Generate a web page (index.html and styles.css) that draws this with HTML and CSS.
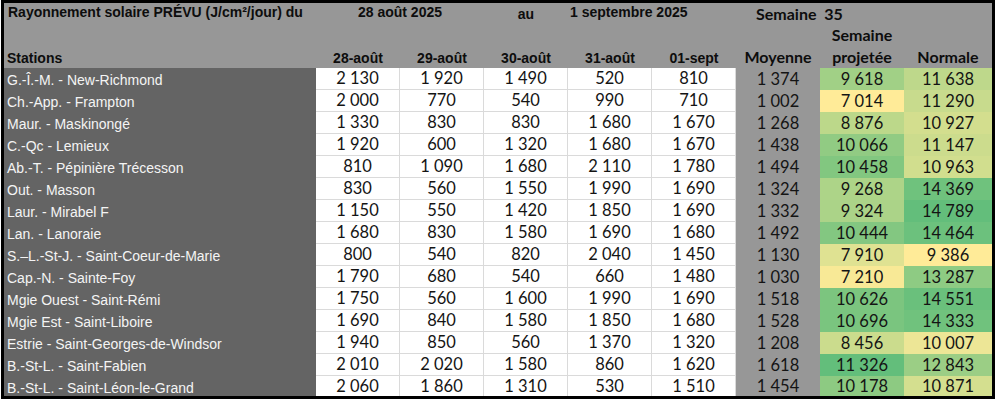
FILE: index.html
```html
<!DOCTYPE html>
<html lang="fr">
<head>
<meta charset="utf-8">
<title>Rayonnement solaire prévu</title>
<link rel="stylesheet" href="styles.css">
</head>
<body>
<div class="sheet">
  <div class="row head1">
    <div class="h title">Rayonnement solaire PRÉVU (J/cm²/jour) du</div>
    <div class="h from">28 août 2025</div>
    <div class="h au">au</div>
    <div class="h to">1 septembre 2025</div>
    <div class="h week">Semaine&nbsp; 35</div>
  </div>
  <div class="row head2">
    <div class="h blank"></div>
    <div class="h cal">Semaine</div>
    <div class="h"></div>
  </div>
  <div class="row head3">
    <div class="h stations">Stations</div>
    <div class="h date">28-août</div>
    <div class="h date">29-août</div>
    <div class="h date">30-août</div>
    <div class="h date">31-août</div>
    <div class="h date">01-sept</div>
    <div class="h cal3">Moyenne</div>
    <div class="h cal3">projetée</div>
    <div class="h cal3">Normale</div>
  </div>

  <div class="row"><div class="st">G.-Î.-M. - New-Richmond</div><div class="d">2&nbsp;130</div><div class="d">1&nbsp;920</div><div class="d">1&nbsp;490</div><div class="d">520</div><div class="d">810</div><div class="m">1&nbsp;374</div><div class="c" style="background:rgb(161,208,134)">9&nbsp;618</div><div class="c" style="background:rgb(190,216,139)">11&nbsp;638</div></div>
  <div class="row"><div class="st">Ch.-App. - Frampton</div><div class="d">2&nbsp;000</div><div class="d">770</div><div class="d">540</div><div class="d">990</div><div class="d">710</div><div class="m">1&nbsp;002</div><div class="c" style="background:rgb(255,235,152)">7&nbsp;014</div><div class="c" style="background:rgb(200,219,141)">11&nbsp;290</div></div>
  <div class="row"><div class="st">Maur. - Maskinongé</div><div class="d">1&nbsp;330</div><div class="d">830</div><div class="d">830</div><div class="d">1&nbsp;680</div><div class="d">1&nbsp;670</div><div class="m">1&nbsp;268</div><div class="c" style="background:rgb(188,216,138)">8&nbsp;876</div><div class="c" style="background:rgb(211,222,142)">10&nbsp;927</div></div>
  <div class="row"><div class="st">C.-Qc - Lemieux</div><div class="d">1&nbsp;920</div><div class="d">600</div><div class="d">1&nbsp;320</div><div class="d">1&nbsp;680</div><div class="d">1&nbsp;670</div><div class="m">1&nbsp;438</div><div class="c" style="background:rgb(145,203,131)">10&nbsp;066</div><div class="c" style="background:rgb(204,220,141)">11&nbsp;147</div></div>
  <div class="row"><div class="st">Ab.-T. - Pépinière Trécesson</div><div class="d">810</div><div class="d">1&nbsp;090</div><div class="d">1&nbsp;680</div><div class="d">2&nbsp;110</div><div class="d">1&nbsp;780</div><div class="m">1&nbsp;494</div><div class="c" style="background:rgb(130,199,128)">10&nbsp;458</div><div class="c" style="background:rgb(209,222,142)">10&nbsp;963</div></div>
  <div class="row"><div class="st">Out. - Masson</div><div class="d">830</div><div class="d">560</div><div class="d">1&nbsp;550</div><div class="d">1&nbsp;990</div><div class="d">1&nbsp;690</div><div class="m">1&nbsp;324</div><div class="c" style="background:rgb(173,212,136)">9&nbsp;268</div><div class="c" style="background:rgb(111,194,125)">14&nbsp;369</div></div>
  <div class="row"><div class="st">Laur. - Mirabel F</div><div class="d">1&nbsp;150</div><div class="d">550</div><div class="d">1&nbsp;420</div><div class="d">1&nbsp;850</div><div class="d">1&nbsp;690</div><div class="m">1&nbsp;332</div><div class="c" style="background:rgb(171,211,136)">9&nbsp;324</div><div class="c" style="background:rgb(99,190,123)">14&nbsp;789</div></div>
  <div class="row"><div class="st">Lan. - Lanoraie</div><div class="d">1&nbsp;680</div><div class="d">830</div><div class="d">1&nbsp;580</div><div class="d">1&nbsp;690</div><div class="d">1&nbsp;680</div><div class="m">1&nbsp;492</div><div class="c" style="background:rgb(131,199,129)">10&nbsp;444</div><div class="c" style="background:rgb(108,193,125)">14&nbsp;464</div></div>
  <div class="row"><div class="st">S.–L.-St-J. - Saint-Coeur-de-Marie</div><div class="d">800</div><div class="d">540</div><div class="d">820</div><div class="d">2&nbsp;040</div><div class="d">1&nbsp;450</div><div class="m">1&nbsp;130</div><div class="c" style="background:rgb(223,226,146)">7&nbsp;910</div><div class="c" style="background:rgb(255,235,152)">9&nbsp;386</div></div>
  <div class="row"><div class="st">Cap.-N. - Sainte-Foy</div><div class="d">1&nbsp;790</div><div class="d">680</div><div class="d">540</div><div class="d">660</div><div class="d">1&nbsp;480</div><div class="m">1&nbsp;030</div><div class="c" style="background:rgb(248,233,150)">7&nbsp;210</div><div class="c" style="background:rgb(142,203,131)">13&nbsp;287</div></div>
  <div class="row"><div class="st">Mgie Ouest - Saint-Rémi</div><div class="d">1&nbsp;750</div><div class="d">560</div><div class="d">1&nbsp;600</div><div class="d">1&nbsp;990</div><div class="d">1&nbsp;690</div><div class="m">1&nbsp;518</div><div class="c" style="background:rgb(124,197,127)">10&nbsp;626</div><div class="c" style="background:rgb(106,192,124)">14&nbsp;551</div></div>
  <div class="row"><div class="st">Mgie Est - Saint-Liboire</div><div class="d">1&nbsp;690</div><div class="d">840</div><div class="d">1&nbsp;580</div><div class="d">1&nbsp;850</div><div class="d">1&nbsp;680</div><div class="m">1&nbsp;528</div><div class="c" style="background:rgb(122,197,127)">10&nbsp;696</div><div class="c" style="background:rgb(112,194,125)">14&nbsp;333</div></div>
  <div class="row"><div class="st">Estrie - Saint-Georges-de-Windsor</div><div class="d">1&nbsp;940</div><div class="d">850</div><div class="d">560</div><div class="d">1&nbsp;370</div><div class="d">1&nbsp;320</div><div class="m">1&nbsp;208</div><div class="c" style="background:rgb(203,220,141)">8&nbsp;456</div><div class="c" style="background:rgb(237,230,150)">10&nbsp;007</div></div>
  <div class="row"><div class="st">B.-St-L. - Saint-Fabien</div><div class="d">2&nbsp;010</div><div class="d">2&nbsp;020</div><div class="d">1&nbsp;580</div><div class="d">860</div><div class="d">1&nbsp;620</div><div class="m">1&nbsp;618</div><div class="c" style="background:rgb(99,190,123)">11&nbsp;326</div><div class="c" style="background:rgb(155,206,133)">12&nbsp;843</div></div>
  <div class="row"><div class="st">B.-St-L. - Saint-Léon-le-Grand</div><div class="d">2&nbsp;060</div><div class="d">1&nbsp;860</div><div class="d">1&nbsp;310</div><div class="d">530</div><div class="d">1&nbsp;510</div><div class="m">1&nbsp;454</div><div class="c" style="background:rgb(141,202,130)">10&nbsp;178</div><div class="c" style="background:rgb(212,223,143)">10&nbsp;871</div></div>
</div>
</body>
</html>
```

FILE: styles.css
```css
* { box-sizing: border-box; }
html, body { margin: 0; padding: 0; background: #fff; }
body { width: 995px; height: 401px; overflow: hidden; }

.sheet {
  margin-left: 1px;
  width: 994px;
  display: grid;
  grid-template-columns: 312px repeat(5, 84px) 84px 84px 88px;
  grid-template-rows: 22px 21px 22px repeat(14, 22px) 20px;
  border: 3px solid #000;
  background: #979797;
  color: #111;
}

.row { display: contents; }

.h {
  font-family: "Liberation Sans", Arial, sans-serif;
  font-weight: bold;
  font-size: 14px;
  color: #0d0d0d;
  white-space: nowrap;
}

.head1 .h { line-height: 18px; }
.title { padding-left: 4px; }
.from { grid-column: 2 / span 2; text-align: center; }
.au { grid-column: 4; text-align: center; padding-top: 2px; }
.to { grid-column: 5 / span 2; padding-left: 2px; }
.head1 .week {
  grid-column: 7 / span 3;
  padding-left: 20px;
  font-family: Lato, "Noto Sans", sans-serif;
  font-size: 16px;
  line-height: 21px;
}

.blank { grid-column: 1 / span 7; }
.cal {
  font-family: Lato, "Noto Sans", sans-serif;
  font-size: 16px;
  line-height: 20px;
  text-align: center;
}

.head3 .h { line-height: 22px; padding-top: 1px; }
.stations { padding-left: 3px; }
.date { text-align: center; }
.head3 .cal3 {
  font-family: Lato, "Noto Sans", sans-serif;
  font-size: 16px;
  text-align: center;
  padding-top: 0;
}

.st {
  background: #646464;
  color: #f4f4f4;
  font-family: "Liberation Sans", Arial, sans-serif;
  font-size: 14px;
  line-height: 22px;
  padding: 1px 0 0 3px;
  white-space: nowrap;
  overflow: hidden;
}

.d, .m, .c {
  font-family: Lato, "Noto Sans", sans-serif;
  font-size: 16.5px;
  line-height: 22px;
  text-align: center;
  white-space: nowrap;
  color: #141414;
}

.d {
  background: #fff;
  border-right: 1px solid #dadada;
  border-bottom: 1px solid #dadada;
  line-height: 21px;
}
.row:last-child .d { border-bottom: 0; line-height: 20px; }

.m { background: #979797; }
.row:last-child .m,
.row:last-child .c { line-height: 20px; }
```
